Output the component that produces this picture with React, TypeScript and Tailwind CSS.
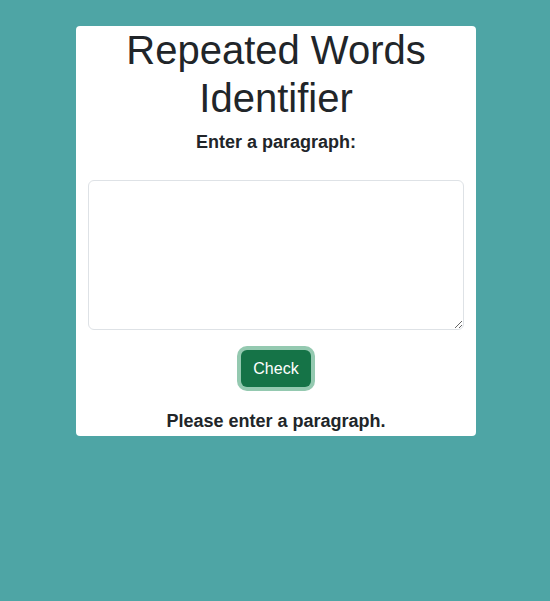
export default function App() {
  return (
    <div
      className="min-h-[601px] w-full bg-[#4ea5a5] pt-[26px] pl-[2px]"
      style={{ fontFamily: '"Liberation Sans", Arial, sans-serif' }}
    >
      <div className="mx-auto w-[400px] rounded bg-white px-3 pb-[1px] text-center text-[#212529]">
        <h1 className="text-[40px] leading-[1.2] font-normal">Repeated Words Identifier</h1>
        <label htmlFor="para" className="mt-[7px] block text-[18px] leading-[27px] font-bold">
          Enter a paragraph:
        </label>
        <textarea
          id="para"
          className="mt-[24px] block h-[150px] w-full rounded-md border border-[#dee2e6] bg-white px-3 py-1.5 outline-none"
        />
        <div className="mt-[20px] flex justify-center">
          <button className="h-[37px] rounded-md bg-[#157347] px-3 text-[16px] text-white ring-4 ring-[#94c9b0]">
            Check
          </button>
        </div>
        <p className="mt-[21px] text-[18px] leading-[27px] font-bold">Please enter a paragraph.</p>
      </div>
    </div>
  );
}
